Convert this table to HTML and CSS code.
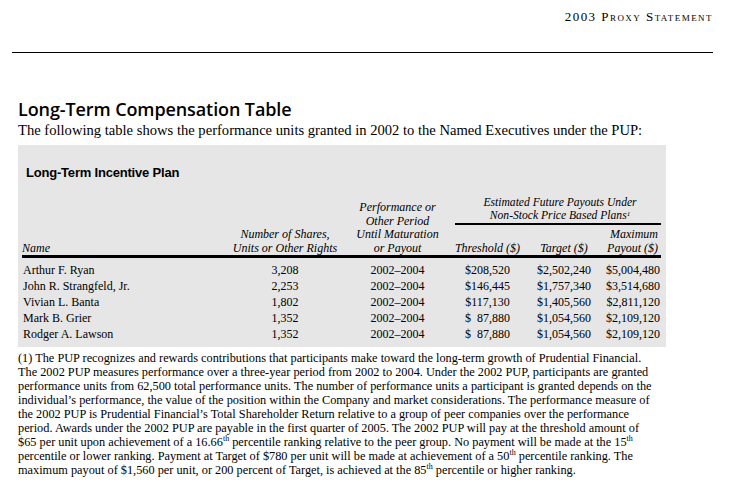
FILE: index.html
```html
<!DOCTYPE html>
<html>
<head>
<meta charset="utf-8">
<link rel="stylesheet" href="styles.css">
</head>
<body>
<div class="page">
  <header class="top">
    <div class="running">2003 Proxy Statement</div>
  </header>
  <h1 class="title">Long-Term Compensation Table</h1>
  <p class="intro">The following table shows the performance units granted in 2002 to the Named Executives under the PUP:</p>
  <section class="panel">
    <h2 class="panel-title">Long-Term Incentive Plan</h2>
    <table class="ltip">
      <colgroup>
        <col class="c-name"><col class="c-shares"><col class="c-period"><col class="c-thr"><col class="c-tgt"><col class="c-max">
      </colgroup>
      <thead>
        <tr>
          <th rowspan="2" class="h-name">Name</th>
          <th rowspan="2" class="h-mid">Number of Shares,<br>Units or Other Rights</th>
          <th rowspan="2" class="h-mid">Performance or<br>Other Period<br>Until Maturation<br>or Payout</th>
          <th colspan="3" class="h-group"><div class="group-label">Estimated Future Payouts Under<br>Non-Stock Price Based Plans<sup>1</sup></div></th>
        </tr>
        <tr class="sub">
          <th class="h-mid">Threshold ($)</th>
          <th class="h-mid">Target ($)</th>
          <th class="h-max">Maximum<br>Payout ($)</th>
        </tr>
      </thead>
      <tbody>
        <tr class="first"><td class="name">Arthur F. Ryan</td><td class="num">3,208</td><td class="num">2002–2004</td><td class="num">$208,520</td><td class="num">$2,502,240</td><td class="num right">$5,004,480</td></tr>
        <tr><td class="name">John R. Strangfeld, Jr.</td><td class="num">2,253</td><td class="num">2002–2004</td><td class="num">$146,445</td><td class="num">$1,757,340</td><td class="num right">$3,514,680</td></tr>
        <tr><td class="name">Vivian L. Banta</td><td class="num">1,802</td><td class="num">2002–2004</td><td class="num">$117,130</td><td class="num">$1,405,560</td><td class="num right">$2,811,120</td></tr>
        <tr><td class="name">Mark B. Grier</td><td class="num">1,352</td><td class="num">2002–2004</td><td class="num pre">$  87,880</td><td class="num">$1,054,560</td><td class="num right">$2,109,120</td></tr>
        <tr class="last"><td class="name">Rodger A. Lawson</td><td class="num">1,352</td><td class="num">2002–2004</td><td class="num pre">$  87,880</td><td class="num">$1,054,560</td><td class="num right">$2,109,120</td></tr>
      </tbody>
    </table>
  </section>
  <p class="note">(1) The PUP recognizes and rewards contributions that participants make toward the long-term growth of Prudential Financial.<br>The 2002 PUP measures performance over a three-year period from 2002 to 2004. Under the 2002 PUP, participants are granted<br>performance units from 62,500 total performance units. The number of performance units a participant is granted depends on the<br>individual’s performance, the value of the position within the Company and market considerations. The performance measure of<br>the 2002 PUP is Prudential Financial’s Total Shareholder Return relative to a group of peer companies over the performance<br>period. Awards under the 2002 PUP are payable in the first quarter of 2005. The 2002 PUP will pay at the threshold amount of<br>$65 per unit upon achievement of a 16.66<sup>th</sup> percentile ranking relative to the peer group. No payment will be made at the 15<sup>th</sup><br>percentile or lower ranking. Payment at Target of $780 per unit will be made at achievement of a 50<sup>th</sup> percentile ranking. The<br>maximum payout of $1,560 per unit, or 200 percent of Target, is achieved at the 85<sup>th</sup> percentile or higher ranking.</p>
</div>
</body>
</html>
```
FILE: styles.css
```css
* { box-sizing: border-box; }
html, body { margin: 0; padding: 0; background: #fff; }
body { font-family: "Liberation Serif", "Times New Roman", serif; color: #000; }

.page { width: 729px; height: 500px; overflow: hidden; }

.top {
  margin: 0 16px 0 12px;
  height: 53px;
  border-bottom: 1px solid #000;
  padding-top: 9px;
}
.running {
  text-align: right;
  font-size: 13px;
  line-height: 16px;
  font-variant: small-caps;
  letter-spacing: 1.45px;
}

.title {
  margin: 45px 0 0 18px;
  font-family: "Open Sans", "DejaVu Sans", sans-serif;
  font-weight: 600;
  font-size: 18px;
  line-height: 22px;
  letter-spacing: -0.1px;
}
.intro {
  margin: 2px 0 0 18px;
  font-size: 14.6px;
  line-height: 17px;
  white-space: nowrap;
}

.panel {
  margin: 6px 0 0 18px;
  width: 648px;
  background: #e6e6e6;
  padding: 20px 5px 5px 4px;
}
.panel-title {
  margin: 0 0 0 4px;
  font-family: "Liberation Sans", Arial, sans-serif;
  font-weight: bold;
  font-size: 13px;
  line-height: 16px;
  letter-spacing: -0.2px;
}

.ltip {
  margin-top: 16px;
  width: 639px;
  border-collapse: collapse;
  table-layout: fixed;
}
.c-name { width: 200px; }
.c-shares { width: 126px; }
.c-period { width: 99px; }
.c-thr { width: 81px; }
.c-tgt { width: 72px; }
.c-max { width: 61px; }

.ltip th {
  font-weight: normal;
  font-style: italic;
  font-size: 12px;
  line-height: 13.5px;
  padding: 0;
  vertical-align: bottom;
  white-space: nowrap;
}
.ltip thead tr.sub th, .ltip th[rowspan] { border-bottom: 3px solid #000; }
.h-name { text-align: left; }
.h-mid { text-align: center; }
.h-max { text-align: right; padding-right: 3px !important; }
.h-group { text-align: center; vertical-align: top !important; }
.group-label {
  margin-left: 8px;
  font-size: 11.6px;
  line-height: 12.5px;
  padding: 0 0 1px 4px;
  border-bottom: 2px solid #000;
  margin-bottom: 3px;
}
.group-label sup { font-size: 7px; line-height: 0; vertical-align: 3px; }

.ltip td {
  font-size: 12px;
  line-height: 16px;
  height: 16px;
  padding: 0;
  white-space: nowrap;
}
.ltip tr.first td { padding-top: 4px; height: 20px; }
.name { text-align: left; padding-left: 1px !important; }
.num { text-align: center; }
.right { text-align: right; padding-right: 1px !important; }
.pre { white-space: pre !important; }

.note {
  margin: 4px 0 0 18px;
  font-size: 12.3px;
  line-height: 14px;
  white-space: nowrap;
}
.note sup { font-size: 8px; line-height: 0; vertical-align: 5px; }
```
